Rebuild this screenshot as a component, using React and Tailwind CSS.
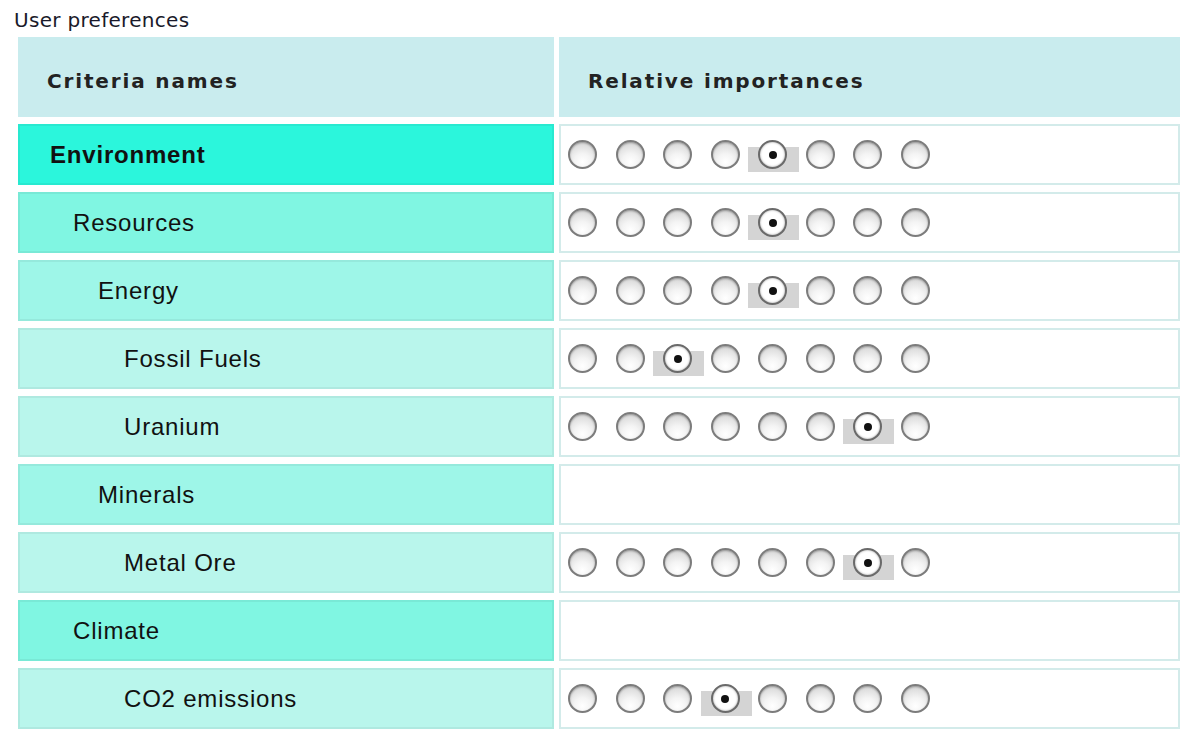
import React from "react";

const rows = [
  { label: "Environment", bold: true, pad: "pl-[30px]", bg: "bg-[#2bf6dc]", sel: 4 },
  { label: "Resources", pad: "pl-[53px]", bg: "bg-[#80f6e2]", sel: 4 },
  { label: "Energy", pad: "pl-[78px]", bg: "bg-[#9ef6e8]", sel: 4 },
  { label: "Fossil Fuels", pad: "pl-[104px]", bg: "bg-[#b9f6ec]", sel: 2 },
  { label: "Uranium", pad: "pl-[104px]", bg: "bg-[#b9f6ec]", sel: 6 },
  { label: "Minerals", pad: "pl-[78px]", bg: "bg-[#9ef6e8]", sel: null },
  { label: "Metal Ore", pad: "pl-[104px]", bg: "bg-[#b9f6ec]", sel: 6 },
  { label: "Climate", pad: "pl-[53px]", bg: "bg-[#80f6e2]", sel: null },
  { label: "CO2 emissions", pad: "pl-[104px]", bg: "bg-[#b9f6ec]", sel: 3 },
];

function Radio({ checked }) {
  if (checked) {
    return (
      <div className="relative w-[29px] h-[29px] shrink-0">
        <div className="absolute left-[-10px] top-[7px] w-[51px] h-[25px] bg-[#d4d4d4]" />
        <div className="absolute inset-0 rounded-full border-2 border-[#6a6a6a] bg-[radial-gradient(circle_at_50%_50%,#ffffff_0%,#ffffff_55%,#e6e6e6_100%)] shadow-[inset_0_0_2px_rgba(0,0,0,0.35)] flex items-center justify-center">
          <div className="w-[8px] h-[8px] rounded-full bg-[#111]" />
        </div>
      </div>
    );
  }
  return (
    <div className="w-[29px] h-[29px] shrink-0 rounded-full border-2 border-[#7c7c7c] bg-[radial-gradient(circle_at_50%_80%,#ffffff_0%,#f4f4f4_35%,#cdcdcd_100%)] shadow-[inset_0_1px_2px_rgba(0,0,0,0.3)]" />
  );
}

export default function App() {
  return (
    <div className="w-[1196px] h-[750px] bg-white relative overflow-hidden">
      <div className="pl-[14px] pt-[8px] h-[37px] text-[20px] leading-[24px] text-[#1a1a2a] font-['DejaVu_Sans',sans-serif] tracking-[0.3px]">
        User preferences
      </div>
      <div className="ml-[18px] grid grid-cols-[536px_621px] gap-x-[5px] gap-y-[7px]">
        <div className="h-[80px] bg-[#c9ecee] flex items-center pl-[29px] pt-[8px] font-['DejaVu_Sans',sans-serif] font-bold text-[20px] tracking-[1.85px] text-[#222]">
          Criteria names
        </div>
        <div className="h-[80px] bg-[#c9ecee] flex items-center pl-[29px] pt-[8px] font-['DejaVu_Sans',sans-serif] font-bold text-[20px] tracking-[1.85px] text-[#222]">
          Relative importances
        </div>
        {rows.map((r) => (
          <React.Fragment key={r.label}>
            <div
              className={`h-[61px] border-2 border-black/[0.05] ${r.bg} ${r.pad} flex items-center font-['Liberation_Sans',Arial,sans-serif] text-[24px] tracking-[0.8px] text-[#111] ${r.bold ? "font-bold" : "font-normal"}`}
            >
              {r.label}
            </div>
            <div className="h-[61px] border-2 border-[#d3ebea] bg-white flex items-center pl-[7px] gap-[18.5px]">
              {r.sel !== null &&
                Array.from({ length: 8 }).map((_, i) => <Radio key={i} checked={i === r.sel} />)}
            </div>
          </React.Fragment>
        ))}
      </div>
    </div>
  );
}
